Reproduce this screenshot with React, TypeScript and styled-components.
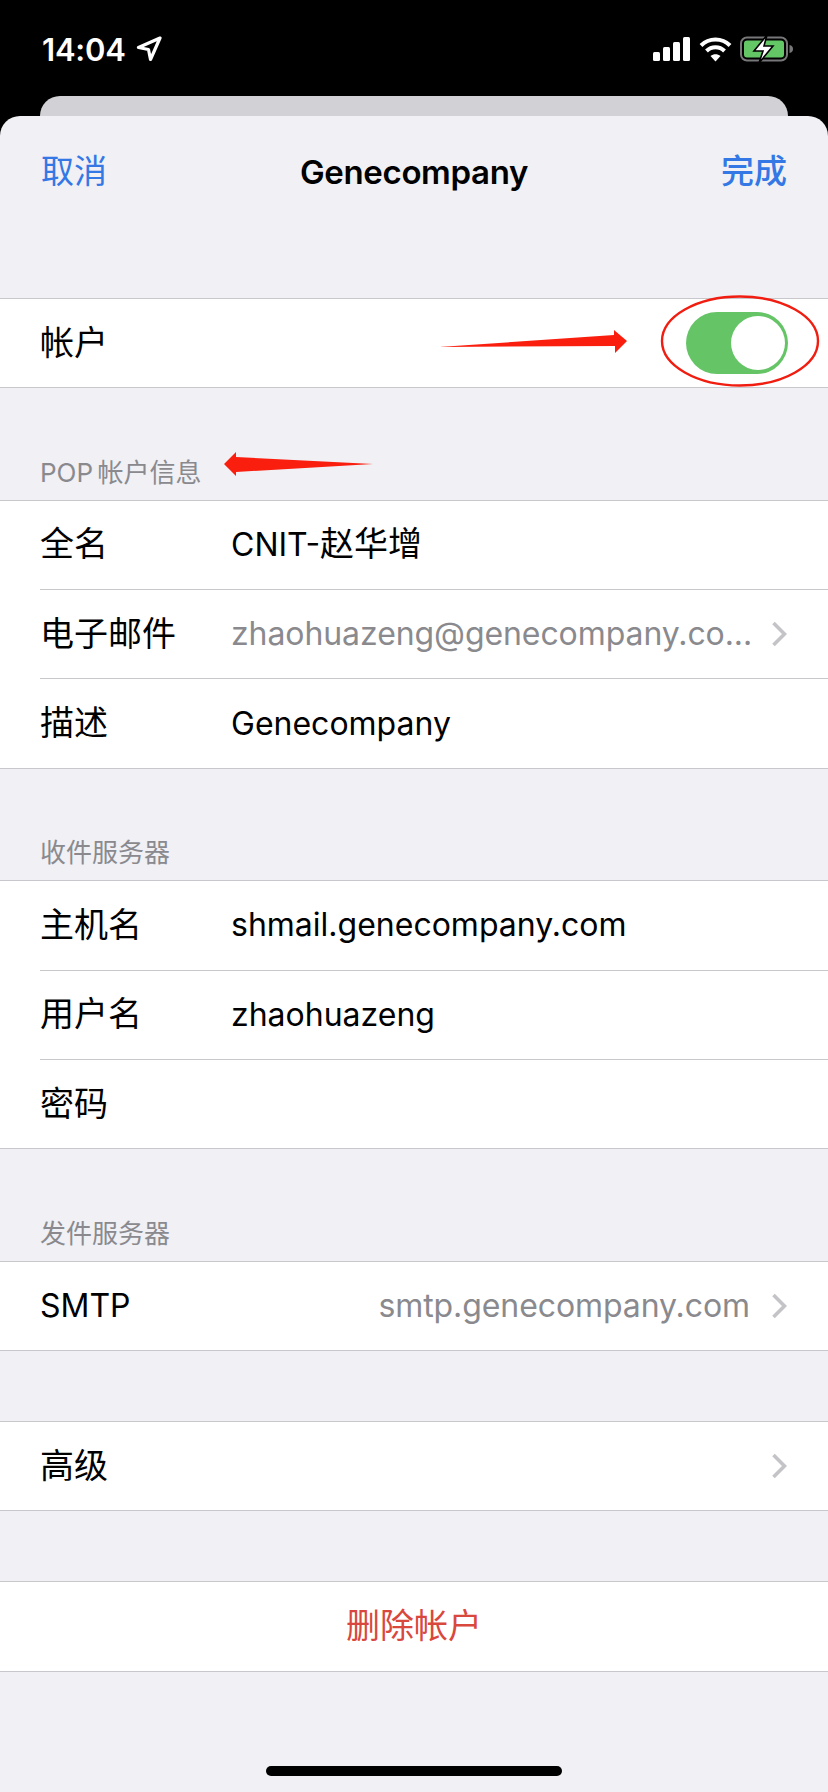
import styled, { createGlobalStyle } from "styled-components";

const FONT = `Inter, "Noto Sans CJK SC", sans-serif`;

const GlobalStyle = createGlobalStyle`
  html, body { margin: 0; padding: 0; background: #000; }
  * { box-sizing: border-box; }
`;

const Page = styled.div`
  position: relative;
  width: 828px;
  height: 1792px;
  overflow: hidden;
  display: flex;
  flex-direction: column;
  background: #000;
  font-family: ${FONT};
`;

const StatusBar = styled.div`
  height: 96px;
  padding: 0 34px 0 42px;
  display: flex;
  align-items: flex-start;
  justify-content: space-between;
  color: #fff;
`;

const TimeGroup = styled.div`
  display: flex;
  align-items: center;
  gap: 10px;
  height: 98px;
`;

const Time = styled.span`
  font-size: 31px;
  font-weight: 600;
  letter-spacing: -0.2px;
`;

const StatusIcons = styled.div`
  display: flex;
  align-items: center;
  gap: 8px;
  height: 98px;
`;

const BackCard = styled.div`
  height: 20px;
  margin: 0 40px;
  background: #d2d2d6;
  border-radius: 20px 20px 0 0;
`;

const Sheet = styled.div`
  flex: 1;
  display: flex;
  flex-direction: column;
  background: #f0f0f5;
  border-radius: 20px 20px 0 0;
`;

const NavBar = styled.div`
  height: 112px;
  padding: 0 41px 0 41px;
  display: flex;
  align-items: center;
  justify-content: space-between;
`;

const NavButton = styled.span<{ $bold?: boolean }>`
  font-size: 33px;
  line-height: 40px;
  padding-bottom: 2px;
  font-weight: ${(p) => (p.$bold ? 500 : 400)};
  color: #3478e5;
`;

const NavTitle = styled.span`
  font-size: 33px;
  line-height: 40px;
  font-weight: 600;
  letter-spacing: -0.35px;
  color: #000;
`;

const Gap = styled.div<{ $h: number }>`
  height: ${(p) => p.$h}px;
`;

const SectionHeader = styled.div`
  height: 111.5px;
  padding: 0 40px 9px;
  display: flex;
  align-items: flex-end;
  font-size: 26px;
  line-height: 36px;
  word-spacing: -3px;
  color: #8a8a8e;
`;

const Group = styled.div`
  background: #fff;
  border-top: 1px solid #c8c8cc;
  border-bottom: 1px solid #c8c8cc;
`;

const Row = styled.div<{ $divider?: boolean }>`
  height: ${(p) => (p.$divider ? 89.33 : 88.33)}px;
  margin-left: 40px;
  padding-right: 41px;
  display: flex;
  align-items: center;
  font-size: 32px;
  line-height: 40px;
  color: #000;
  border-bottom: ${(p) => (p.$divider ? "1px solid #c8c8cc" : "none")};
`;

const Label = styled.span<{ $latin?: boolean }>`
  width: 191px;
  flex-shrink: 0;
  font-size: ${(p) => (p.$latin ? 32 : 34)}px;
  padding-bottom: ${(p) => (p.$latin ? 0 : 1)}px;
`;

const Value = styled.span<{ $muted?: boolean; $right?: boolean }>`
  flex: 1;
  min-width: 0;
  white-space: nowrap;
  letter-spacing: ${(p) => (p.$muted ? "-0.08px" : "normal")};
  color: ${(p) => (p.$muted ? "#8a8a8e" : "#000")};
  text-align: ${(p) => (p.$right ? "right" : "left")};
`;

const CjkRun = styled.span`
  font-size: 34px;
`;

const Chevron = styled.svg`
  width: 16px;
  height: 26px;
  margin-left: 21px;
  flex-shrink: 0;
`;

const Toggle = styled.div`
  margin-left: auto;
  margin-right: -1px;
  width: 102px;
  height: 62px;
  padding: 4px 3px;
  border-radius: 31px;
  background: #65c466;
  display: flex;
  justify-content: flex-end;
`;

const Knob = styled.div`
  width: 54px;
  height: 54px;
  border-radius: 50%;
  background: #fff;
`;

const DeleteRow = styled(Row)`
  margin-left: 0;
  padding-right: 0;
  padding-bottom: 1px;
  justify-content: center;
  font-size: 34px;
  color: #d9483c;
`;

const HomeBar = styled.div`
  width: 296px;
  height: 10px;
  margin: auto auto 16px;
  border-radius: 5px;
  background: #000;
`;

const Annotations = styled.svg`
  position: absolute;
  inset: 0;
  width: 828px;
  height: 1792px;
  pointer-events: none;
`;

function RowChevron() {
  return (
    <Chevron viewBox="0 0 16 26">
      <path d="M2.5 2 L13.5 13 L2.5 24" fill="none" stroke="#c4c4c8" strokeWidth="3.6" />
    </Chevron>
  );
}

function SignalIcon() {
  return (
    <svg width="38" height="24" viewBox="0 0 38 24">
      <rect x="0" y="15" width="7" height="9" rx="1.5" fill="#fff" />
      <rect x="10" y="10" width="7" height="14" rx="1.5" fill="#fff" />
      <rect x="20" y="5" width="7" height="19" rx="1.5" fill="#fff" />
      <rect x="30" y="0" width="7" height="24" rx="1.5" fill="#fff" />
    </svg>
  );
}

function WifiIcon() {
  return (
    <svg width="33" height="25" viewBox="0 0 33 25">
      <path d="M2 8.5 C10 0.5 23 0.5 31 8.5" fill="none" stroke="#fff" strokeWidth="4" />
      <path d="M7.5 14 C12.5 9 20.5 9 25.5 14" fill="none" stroke="#fff" strokeWidth="4" />
      <path d="M11.5 19 L16.5 24.5 L21.5 19 C18.5 16.5 14.5 16.5 11.5 19 Z" fill="#fff" />
    </svg>
  );
}

function BatteryIcon() {
  return (
    <svg width="54" height="28" viewBox="0 0 54 28">
      <rect x="1" y="2.5" width="46" height="23" rx="6" fill="none" stroke="#77777a" strokeWidth="2" />
      <rect x="4" y="5.5" width="40" height="17" rx="3" fill="#62c764" />
      <path d="M49.5 10 C52 10.5 53 12 53 14 C53 16 52 17.5 49.5 18 Z" fill="#77777a" />
      <path d="M27 0 L14 16 H23 L19 28 L33 11 H24 Z" fill="#fff" stroke="#000" strokeWidth="1.6" />
    </svg>
  );
}

function LocationIcon() {
  return (
    <svg width="26" height="26" viewBox="0 0 26 26">
      <path d="M24 2 L2.5 11.5 L12.5 13.5 L14.5 23.5 Z" fill="none" stroke="#fff" strokeWidth="3.2" strokeLinejoin="round" />
    </svg>
  );
}

export default function App() {
  return (
    <Page>
      <GlobalStyle />
      <StatusBar>
        <TimeGroup>
          <Time>14:04</Time>
          <LocationIcon />
        </TimeGroup>
        <StatusIcons>
          <SignalIcon />
          <WifiIcon />
          <BatteryIcon />
        </StatusIcons>
      </StatusBar>
      <BackCard />
      <Sheet>
        <NavBar>
          <NavButton>取消</NavButton>
          <NavTitle>Genecompany</NavTitle>
          <NavButton $bold>完成</NavButton>
        </NavBar>
        <Gap $h={70} />
        <Group>
          <Row>
            <Label>帐户</Label>
            <Toggle>
              <Knob />
            </Toggle>
          </Row>
        </Group>
        <SectionHeader>POP 帐户信息</SectionHeader>
        <Group>
          <Row $divider>
            <Label>全名</Label>
            <Value>
              CNIT-<CjkRun>赵华增</CjkRun>
            </Value>
          </Row>
          <Row $divider>
            <Label>电子邮件</Label>
            <Value $muted>zhaohuazeng@genecompany.co...</Value>
            <RowChevron />
          </Row>
          <Row>
            <Label>描述</Label>
            <Value>Genecompany</Value>
          </Row>
        </Group>
        <SectionHeader>收件服务器</SectionHeader>
        <Group>
          <Row $divider>
            <Label>主机名</Label>
            <Value>shmail.genecompany.com</Value>
          </Row>
          <Row $divider>
            <Label>用户名</Label>
            <Value>zhaohuazeng</Value>
          </Row>
          <Row>
            <Label>密码</Label>
          </Row>
        </Group>
        <SectionHeader>发件服务器</SectionHeader>
        <Group>
          <Row>
            <Label $latin>SMTP</Label>
            <Value $muted $right>smtp.genecompany.com</Value>
            <RowChevron />
          </Row>
        </Group>
        <Gap $h={70} />
        <Group>
          <Row>
            <Label>高级</Label>
            <Value />
            <RowChevron />
          </Row>
        </Group>
        <Gap $h={70} />
        <Group>
          <DeleteRow>删除帐户</DeleteRow>
        </Group>
        <HomeBar />
      </Sheet>
      <Annotations viewBox="0 0 828 1792">
        <ellipse cx="740" cy="341" rx="78" ry="44.5" fill="none" stroke="#f01d10" strokeWidth="2.4" />
        <polygon points="439,347 614,335 614,330 627,341 615,353 615,346" fill="#fa1e0f" />
        <polygon points="373,464 236,457 236,452 224,464 236,476 236,472" fill="#fa1e0f" />
      </Annotations>
    </Page>
  );
}
